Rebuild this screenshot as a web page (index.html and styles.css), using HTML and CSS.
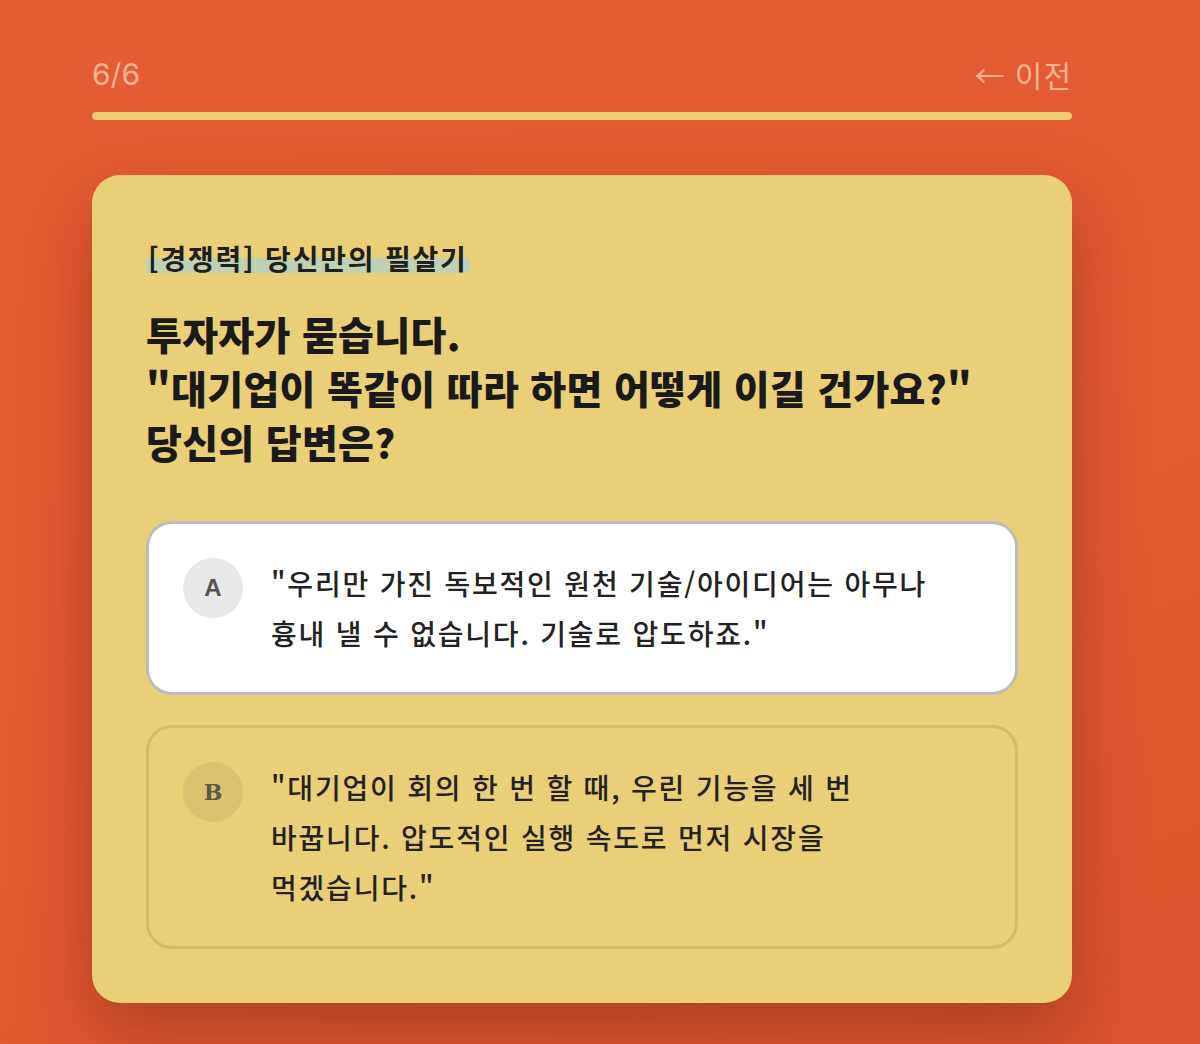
FILE: index.html
```html
<!DOCTYPE html>
<html lang="ko">
<head>
  <meta charset="UTF-8">
  <title>스타트업 성향 테스트</title>
  <link rel="stylesheet" href="styles.css">
</head>
<body>
  <div class="quiz">
    <div class="quiz-top">
      <span class="step">6/6</span>
      <button class="back" type="button">← 이전</button>
    </div>
    <div class="progress"><div class="progress-fill" style="width: 100%"></div></div>

    <div class="card">
      <div class="tag"><span>[경쟁력] 당신만의 필살기</span></div>
      <h2 class="question">투자자가 묻습니다.<br>"대기업이 똑같이 따라 하면 어떻게 이길 건가요?"<br>당신의 답변은?</h2>

      <div class="options">
        <div class="option selected">
          <span class="badge">A</span>
          <p>"우리만 가진 독보적인 원천 기술/아이디어는 아무나 흉내 낼 수 없습니다. 기술로 압도하죠."</p>
        </div>
        <div class="option">
          <span class="badge badge-serif">B</span>
          <p>"대기업이 회의 한 번 할 때, 우린 기능을 세 번 바꿉니다. 압도적인 실행 속도로 먼저 시장을 먹겠습니다."</p>
        </div>
      </div>
    </div>
  </div>
</body>
</html>
```

FILE: styles.css
```css
* {
  box-sizing: border-box;
}
body {
  margin: 0;
  min-height: 100vh;
  background: linear-gradient(160deg, #e65c34 0%, #e35a33 60%, #d9552f 100%);
  font-family: 'Noto Sans CJK KR', 'Noto Sans', sans-serif;
  color: #1c1c1c;
  word-break: keep-all;
}
.quiz {
  width: 980px;
  margin-left: 92px;
  padding-top: 54px;
}
.quiz-top {
  display: flex;
  justify-content: space-between;
  align-items: center;
  height: 40px;
}
.step {
  font-family: 'Inter', 'Noto Sans', sans-serif;
  font-size: 30px;
  color: #f5b496;
}
.back {
  background: none;
  border: none;
  padding: 0;
  font-family: 'Noto Sans CJK KR', sans-serif;
  font-size: 30px;
  letter-spacing: 1px;
  color: #f5b496;
  cursor: pointer;
}
.progress {
  margin-top: 18px;
  height: 8px;
  border-radius: 4px;
  background: rgba(255, 255, 255, 0.2);
  overflow: hidden;
}
.progress-fill {
  height: 100%;
  border-radius: 4px;
  background: #edcf72;
}
.card {
  margin-top: 55px;
  background: #e9cf78;
  border-radius: 28px;
  padding: 63px 54px 54px;
  box-shadow: 0 30px 70px rgba(80, 20, 0, 0.35);
}
.tag {
  font-size: 28px;
  font-weight: 700;
  line-height: 40px;
  letter-spacing: 1.8px;
  color: #1f1f1f;
}
.tag span {
  padding: 0 2px;
  background: linear-gradient(transparent 50%, #bfd0b3 50%, #bfd0b3 88%, transparent 88%);
}
.question {
  margin: 28px 0 53px;
  font-size: 39px;
  font-weight: 900;
  line-height: 54px;
  letter-spacing: 0.3px;
  color: #1a1a1a;
}
.options {
  display: flex;
  flex-direction: column;
  gap: 30px;
}
.option {
  display: flex;
  align-items: flex-start;
  gap: 28px;
  padding: 34px;
  border: 3px solid #d3ba6b;
  border-radius: 26px;
  cursor: pointer;
}
.option.selected {
  background: #fff;
  border-color: #bcbcbc;
}
.option p {
  margin: 0;
  max-width: 690px;
  font-size: 28px;
  font-weight: 500;
  line-height: 50px;
  letter-spacing: 1.8px;
  color: #222;
}
.badge {
  flex-shrink: 0;
  width: 60px;
  height: 60px;
  border-radius: 50%;
  display: flex;
  align-items: center;
  justify-content: center;
  background: #dcc270;
  font-family: 'Liberation Sans', sans-serif;
  font-size: 24px;
  font-weight: 700;
  color: #5a5a4a;
}
.selected .badge {
  background: #e8e8e8;
  color: #555;
}
.badge-serif {
  font-family: 'DejaVu Serif', serif;
  font-size: 22px;
}
```
